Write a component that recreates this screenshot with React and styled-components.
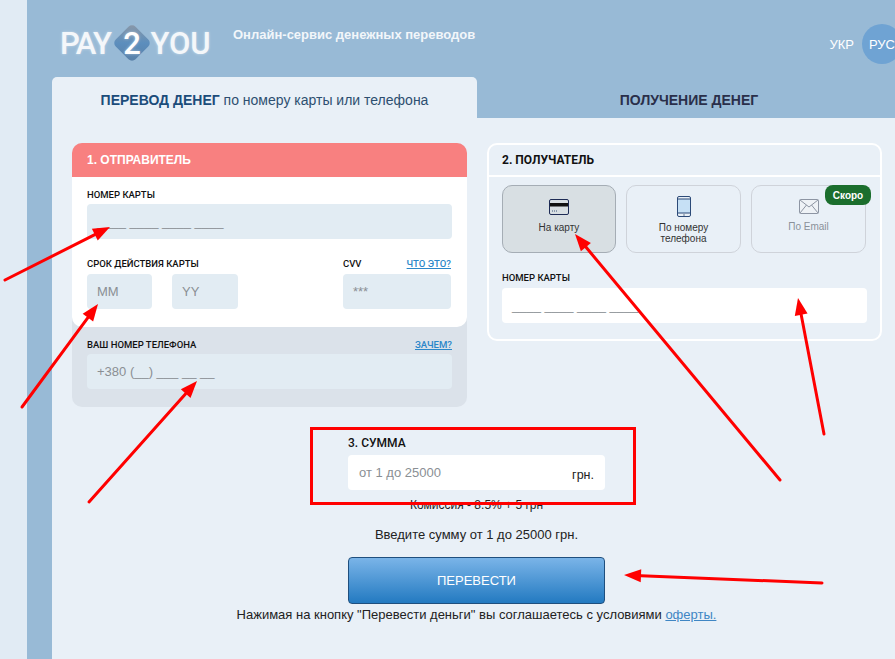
import React from "react";
import styled, { createGlobalStyle } from "styled-components";

const Global = createGlobalStyle`
  html, body { margin: 0; padding: 0; background: #e1ebf4; }
  body { font-family: "Liberation Sans", Arial, sans-serif; color: #111; }
  * { box-sizing: border-box; }
`;

const Page = styled.div`
  position: relative;
  width: 895px;
  height: 659px;
  overflow: hidden;
  padding-left: 27px;
`;
const Wrapper = styled.div`
  width: 900px;
  height: 659px;
  background: #98bad6;
  padding-left: 25px;
`;
const Header = styled.header`
  display: flex;
  height: 77px;
  width: 849px;
`;
const Logo = styled.div`
  display: flex;
  align-items: center;
  height: 60px;
  margin: 13px 0 0 8px;
  font-family: Roboto, sans-serif;
  font-weight: 500;
  font-size: 31px;
  color: #f4f7fa;
  text-shadow: 0 0 3px rgba(255, 255, 255, 0.45);
  width: 173px;
`;
const LogoPay = styled.span`
  letter-spacing: -1.6px;
`;
const LogoTwo = styled.span`
  position: relative;
  z-index: 0;
  width: 37px;
  margin: 0 0 0 3px;
  text-align: center;
  color: #fff;
  &::before {
    content: "";
    position: absolute;
    z-index: -1;
    left: 4.5px;
    top: 4px;
    width: 28px;
    height: 28px;
    border-radius: 5px;
    transform: rotate(45deg);
    background: linear-gradient(135deg, #8d98a6 0%, #5c8ebd 50%, #5a80a6 100%);
  }
`;
const Tagline = styled.div`
  font-size: 13px;
  font-weight: 700;
  color: #f2f6fa;
  line-height: 16px;
  margin-top: 27px;
`;
const Langs = styled.nav`
  margin-left: auto;
  margin-right: -1px;
  display: flex;
  align-items: center;
  gap: 8px;
  height: 40px;
  margin-top: 24px;
  font-size: 13px;
  color: #fff;
`;
const Lang = styled.span`
  ${(p) =>
    p.$active
      ? `width: 40px; height: 40px; border-radius: 50%; background: #6fa3d3; display: flex; align-items: center; justify-content: center;`
      : ""}
`;
const Tabs = styled.div`
  display: flex;
  width: 849px;
  height: 41px;
`;
const Tab = styled.div`
  width: ${(p) => (p.$active ? "425px" : "424px")};
  display: flex;
  align-items: center;
  justify-content: center;
  font-size: 14px;
  padding-top: 4px;
  border-radius: 5px 5px 0 0;
  color: #2d4f70;
  background: ${(p) => (p.$active ? "#e9f0f7" : "transparent")};
  white-space: pre;
  b { color: ${(p) => (p.$active ? "#1b4c7a" : "#2a2f4a")}; }
`;
const Panel = styled.main`
  width: 849px;
  height: 541px;
  background: #e9f0f7;
  padding: 25px 0 0 20px;
`;
const Columns = styled.div`
  display: flex;
  align-items: flex-start;
  gap: 20px;
`;
const Sender = styled.section`
  width: 395px;
  background: #dbe2ea;
  border-radius: 10px;
`;
const SenderHead = styled.h2`
  margin: 0;
  height: 34px;
  padding-left: 15px;
  display: flex;
  align-items: center;
  background: #f88080;
  color: #fff;
  font-size: 12px;
  font-weight: 700;
  border-radius: 10px 10px 0 0;
`;
const SenderBody = styled.div`
  background: #fff;
  border-radius: 0 0 10px 10px;
  padding: 11px 15px 18px;
`;
const SenderFoot = styled.div`
  padding: 11px 15px 18px;
`;
const LabelRow = styled.div`
  display: flex;
  justify-content: space-between;
  align-items: center;
  height: 12px;
  margin-bottom: ${(p) => p.$gap || 4}px;
`;
const Label = styled.span`
  font-family: Roboto, sans-serif;
  font-size: 9.5px;
  font-weight: 500;
  color: #111;
  white-space: nowrap;
`;
const Help = styled.a`
  font-family: Roboto, sans-serif;
  font-size: 9.6px;
  font-weight: 500;
  color: #2b87c9;
  text-decoration: underline;
`;
const Field = styled.div`
  height: 35px;
  width: ${(p) => p.$w || "100%"};
  background: ${(p) => p.$bg || "#e2ecf3"};
  border-radius: 4px;
  padding-left: 10px;
  display: flex;
  align-items: center;
  font-size: 13px;
  color: #8a8f94;
  white-space: pre;
`;
const ExpRow = styled.div`
  display: flex;
  justify-content: space-between;
  margin-top: 18px;
`;
const ExpLeft = styled.div``;
const ExpFields = styled.div`
  display: flex;
  gap: 20px;
`;
const CvvCol = styled.div`
  width: 108px;
  margin-right: 1px;
`;
const Receiver = styled.section`
  width: 395px;
  height: 198px;
  border: 2px solid #fff;
  border-radius: 10px;
`;
const ReceiverHead = styled.h2`
  margin: 0;
  height: 32px;
  padding-left: 13px;
  display: flex;
  align-items: center;
  border-bottom: 2px solid #fff;
  font-family: Roboto, sans-serif;
  font-size: 12px;
  font-weight: 700;
  color: #111;
`;
const ReceiverBody = styled.div`
  padding: 8px 13px 0;
`;
const Options = styled.div`
  display: flex;
  gap: 10px;
  margin-bottom: 18px;
`;
const Option = styled.div`
  position: relative;
  width: ${(p) => p.$w}px;
  height: 68px;
  border-radius: 10px;
  border: 1px solid ${(p) => (p.$active ? "#a5adb5" : "#cfd3da")};
  background: ${(p) => (p.$active ? "#d8dfe3" : "transparent")};
  display: flex;
  flex-direction: column;
  align-items: center;
  padding-top: ${(p) => p.$top}px;
  font-size: 10px;
  line-height: 11px;
  text-align: center;
  color: ${(p) => (p.$muted ? "#8a9099" : "#333")};
`;
const OptionIcon = styled.svg`
  display: block;
  margin-bottom: ${(p) => p.$gap}px;
`;
const Badge = styled.span`
  position: absolute;
  top: -1px;
  right: -6px;
  width: 46px;
  height: 20px;
  border-radius: 8px;
  background: #1b6e2d;
  color: #fff;
  font-size: 10px;
  font-weight: 700;
  display: flex;
  align-items: center;
  justify-content: center;
`;
const Sum = styled.section`
  width: 257px;
  margin: 30px 0 0 276px;
`;
const SumLabel = styled.div`
  font-family: Roboto, sans-serif;
  font-size: 12px;
  line-height: 12px;
  font-weight: 500;
  color: #111;
  margin-bottom: 6px;
`;
const SumField = styled.div`
  height: 35px;
  background: #fff;
  border-radius: 4px;
  padding: 0 11px;
  display: flex;
  align-items: center;
  justify-content: space-between;
  font-size: 13px;
  color: #8a8f94;
`;
const Unit = styled.span`
  color: #222;
  font-size: 12.5px;
  margin-top: 4px;
`;
const Center = styled.div`
  width: 809px;
  text-align: center;
`;
const Commission = styled.p`
  margin: 8px 0 0;
  font-size: 12px;
  line-height: 15px;
  color: #222;
`;
const Hint = styled.p`
  margin: 14px 0 0;
  font-size: 13px;
  line-height: 15px;
  color: #222;
`;
const Submit = styled.button`
  display: block;
  margin: 15px auto 0;
  width: 257px;
  height: 47px;
  border: 1px solid #1f4f7e;
  border-radius: 4px;
  background: linear-gradient(#7ab4e8, #237ac1);
  color: #fff;
  font: 13px "Liberation Sans", Arial, sans-serif;
`;
const Terms = styled.p`
  margin: 3px 0 0;
  font-size: 13px;
  line-height: 15px;
  color: #222;
  a { color: #3f86c4; text-decoration: underline; }
`;
const Marks = styled.svg`
  position: absolute;
  inset: 0;
  pointer-events: none;
`;

const Arrow = ({ x1, y1, x2, y2 }) => {
  const a = Math.atan2(y2 - y1, x2 - x1);
  const L = 17, W = 6.5;
  const bx = x2 - L * Math.cos(a), by = y2 - L * Math.sin(a);
  const nx = -Math.sin(a), ny = Math.cos(a);
  return (
    <g>
      <line x1={x1} y1={y1} x2={bx} y2={by} stroke="#f00" strokeWidth="3" strokeLinecap="round" />
      <polygon points={`${x2},${y2} ${bx + nx * W},${by + ny * W} ${bx - nx * W},${by - ny * W}`} fill="#f00" />
    </g>
  );
};

const mask = "____ ____ ____ ____";

export default function App() {
  return (
    <Page>
      <Global />
      <Wrapper>
        <Header>
          <Logo>
            <LogoPay>PAY</LogoPay><LogoTwo>2</LogoTwo>YOU
          </Logo>
          <Tagline>Онлайн-сервис денежных переводов</Tagline>
          <Langs>
            <Lang>УКР</Lang>
            <Lang $active>РУС</Lang>
          </Langs>
        </Header>
        <Tabs>
          <Tab $active><b>ПЕРЕВОД ДЕНЕГ</b> по номеру карты или телефона</Tab>
          <Tab><b>ПОЛУЧЕНИЕ ДЕНЕГ</b></Tab>
        </Tabs>
        <Panel>
          <Columns>
            <Sender>
              <SenderHead>1. ОТПРАВИТЕЛЬ</SenderHead>
              <SenderBody>
                <LabelRow><Label>НОМЕР КАРТЫ</Label></LabelRow>
                <Field>{mask}</Field>
                <ExpRow>
                  <ExpLeft>
                    <LabelRow $gap={5}><Label>СРОК ДЕЙСТВИЯ КАРТЫ</Label></LabelRow>
                    <ExpFields>
                      <Field $w="65px">MM</Field>
                      <Field $w="66px">YY</Field>
                    </ExpFields>
                  </ExpLeft>
                  <CvvCol>
                    <LabelRow $gap={5}><Label>CVV</Label><Help>ЧТО ЭТО?</Help></LabelRow>
                    <Field>***</Field>
                  </CvvCol>
                </ExpRow>
              </SenderBody>
              <SenderFoot>
                <LabelRow><Label>ВАШ НОМЕР ТЕЛЕФОНА</Label><Help>ЗАЧЕМ?</Help></LabelRow>
                <Field>+380 (__) ___ __ __</Field>
              </SenderFoot>
            </Sender>
            <Receiver>
              <ReceiverHead>2. ПОЛУЧАТЕЛЬ</ReceiverHead>
              <ReceiverBody>
                <Options>
                  <Option $w={114} $top={13} $active>
                    <OptionIcon $gap={7} width="20" height="16" viewBox="0 0 20 16" fill="none">
                      <rect x="0.5" y="0.5" width="19" height="15" rx="1.5" stroke="#1d2b55" />
                      <rect x="1" y="4" width="18" height="3.5" fill="#111" />
                      <path d="M3 12h1M5 12h1M7 12h1" stroke="#3a5578" />
                    </OptionIcon>
                    На карту
                  </Option>
                  <Option $w={115} $top={10}>
                    <OptionIcon $gap={5} width="14" height="21" viewBox="0 0 14 21" fill="none">
                      <rect x="0.5" y="0.5" width="13" height="20" rx="1.5" stroke="#2c4a78" />
                      <rect x="1" y="3" width="12" height="14" fill="#c6e0f5" />
                      <path d="M1 3h12M1 17h12" stroke="#2c4a78" />
                      <path d="M6 19h2" stroke="#6d7d90" />
                    </OptionIcon>
                    По номеру<br />телефона
                  </Option>
                  <Option $w={115} $top={13} $muted>
                    <OptionIcon $gap={7} width="20" height="15" viewBox="0 0 20 15" fill="none">
                      <rect x="0.5" y="0.5" width="19" height="14" rx="1" fill="#eef2f6" stroke="#8d95a3" />
                      <path d="M1 1l9 7 9-7M1 14l6.5-8M19 14l-6.5-8" stroke="#8d95a3" />
                    </OptionIcon>
                    По Email
                    <Badge>Скоро</Badge>
                  </Option>
                </Options>
                <LabelRow $gap={5}><Label>НОМЕР КАРТЫ</Label></LabelRow>
                <Field $bg="#fff">{mask}</Field>
              </ReceiverBody>
            </Receiver>
          </Columns>
          <Sum>
            <SumLabel>3. СУММА</SumLabel>
            <SumField>от 1 до 25000<Unit>грн.</Unit></SumField>
          </Sum>
          <Center>
            <Commission>Комиссия - 8.5% + 5 грн</Commission>
            <Hint>Введите сумму от 1 до 25000 грн.</Hint>
            <Submit>ПЕРЕВЕСТИ</Submit>
            <Terms>Нажимая на кнопку "Перевести деньги" вы соглашаетесь с условиями <a>оферты.</a></Terms>
          </Center>
        </Panel>
      </Wrapper>
      <Marks width="895" height="659" viewBox="0 0 895 659">
        <rect x="311.5" y="428.5" width="323" height="75" fill="none" stroke="#f00" strokeWidth="3" />
        <Arrow x1={5} y1={280} x2={110} y2={227} />
        <Arrow x1={22} y1={407} x2={98} y2={304} />
        <Arrow x1={89} y1={502} x2={197} y2={381} />
        <Arrow x1={780} y1={480} x2={575} y2={234} />
        <Arrow x1={824} y1={434} x2={798} y2={298} />
        <Arrow x1={822} y1={583} x2={624} y2={575} />
      </Marks>
    </Page>
  );
}
